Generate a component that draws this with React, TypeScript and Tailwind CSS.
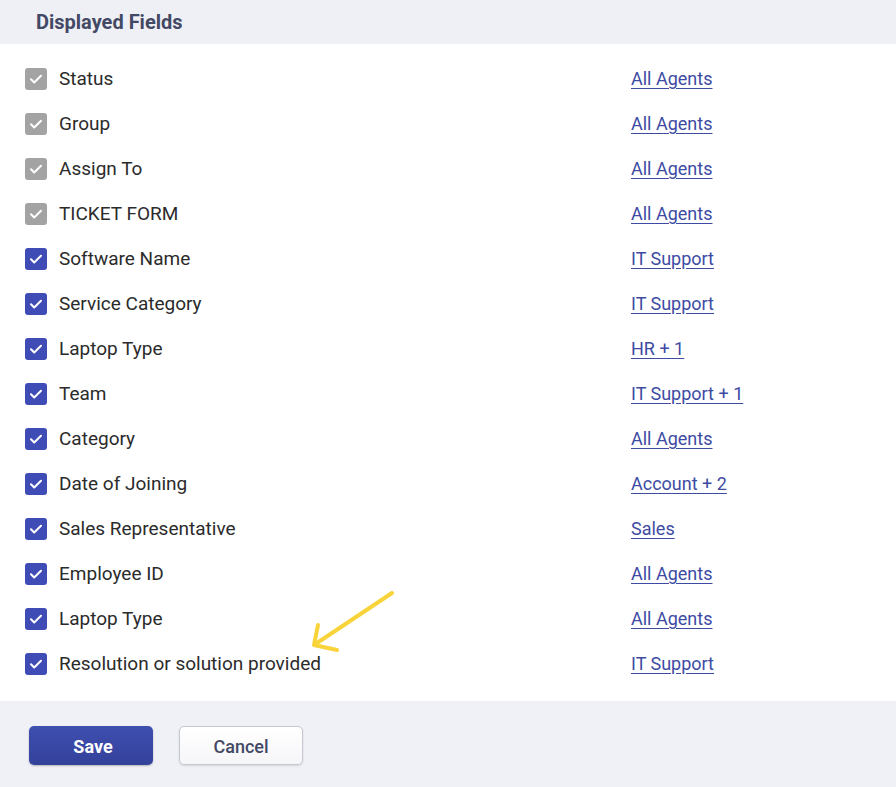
import React from "react";

type Field = { label: string; access: string; locked?: boolean };

const fields: Field[] = [
  { label: "Status", access: "All Agents", locked: true },
  { label: "Group", access: "All Agents", locked: true },
  { label: "Assign To", access: "All Agents", locked: true },
  { label: "TICKET FORM", access: "All Agents", locked: true },
  { label: "Software Name", access: "IT Support" },
  { label: "Service Category", access: "IT Support" },
  { label: "Laptop Type", access: "HR + 1" },
  { label: "Team", access: "IT Support + 1" },
  { label: "Category", access: "All Agents" },
  { label: "Date of Joining", access: "Account + 2" },
  { label: "Sales Representative", access: "Sales" },
  { label: "Employee ID", access: "All Agents" },
  { label: "Laptop Type", access: "All Agents" },
  { label: "Resolution or solution provided", access: "IT Support" },
];

const Check = ({ locked }: { locked?: boolean }) => (
  <span
    className={
      "flex h-[22px] w-[22px] shrink-0 items-center justify-center rounded-[3px] " +
      (locked ? "bg-[#a3a3a3]" : "bg-[#3f4cb5]")
    }
  >
    <svg width="16" height="16" viewBox="0 0 16 16" fill="none">
      <path
        d="M3 8.3l3.2 3.2L13 4.7"
        stroke="white"
        strokeWidth="2"
        strokeLinecap="round"
        strokeLinejoin="round"
      />
    </svg>
  </span>
);

export default function App() {
  return (
    <div className="relative flex h-[787px] w-[896px] flex-col bg-white font-['Roboto',sans-serif]">
      <header className="flex h-[44px] items-center bg-[#eff0f5] px-[36px]">
        <h2 className="text-[20px] font-bold text-[#434965]">Displayed Fields</h2>
      </header>

      <ul className="flex flex-col pt-[12px]">
        {fields.map((f, i) => (
          <li key={i} className="flex h-[45px] items-center pl-[25px]">
            <Check locked={f.locked} />
            <span className="ml-[12px] w-[572px] pt-[2px] text-[19px] text-[#2b2b2b]">
              {f.label}
            </span>
            <a
              href="#"
              className="text-[18px] text-[#3d4ba3] underline underline-offset-[3px]"
            >
              {f.access}
            </a>
          </li>
        ))}
      </ul>

      <footer className="mt-auto flex h-[86px] items-start gap-[26px] bg-[#f0f1f6] pl-[29px] pt-[25px]">
        <button className="h-[39px] w-[124px] rounded-[5px] bg-gradient-to-b from-[#3f4fb0] to-[#33419a] pl-[4px] pt-[2px] text-[18px] font-bold text-white shadow-[0_1px_2px_rgba(0,0,0,0.25)]">
          Save
        </button>
        <button className="h-[39px] w-[124px] rounded-[5px] border border-[#c5c7d2] bg-gradient-to-b from-white to-[#f6f6f9] pt-[2px] text-[18px] font-medium text-[#434965] shadow-[0_1px_2px_rgba(0,0,0,0.12)]">
          Cancel
        </button>
      </footer>

      <svg
        className="pointer-events-none absolute left-0 top-0"
        width="896"
        height="787"
        viewBox="0 0 896 787"
        fill="none"
      >
        <path
          d="M392 593L314 645M314 645L318 625M314 645L337 650"
          stroke="#f8d33a"
          strokeWidth="4"
          strokeLinecap="round"
          strokeLinejoin="round"
        />
      </svg>
    </div>
  );
}
